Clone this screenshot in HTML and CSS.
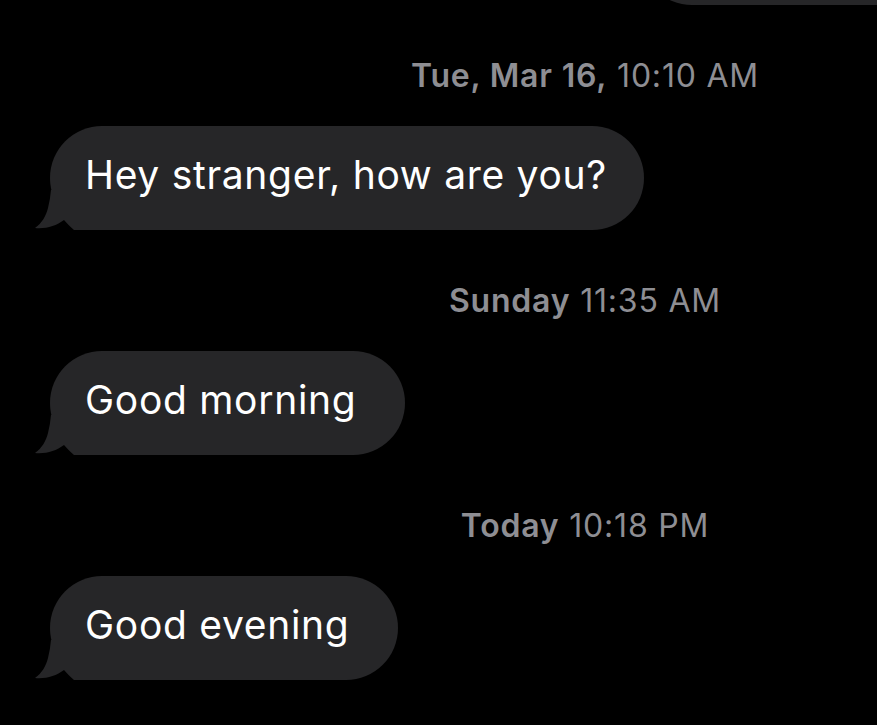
FILE: index.html
```html
<!DOCTYPE html>
<html>
<head>
  <meta charset="utf-8">
  <meta name="viewport" content="width=device-width, initial-scale=1">
  <title>Messages</title>
  <link rel="stylesheet" href="styles.css">
</head>
<body>
  <div class="thread">

    <!-- tail end of the previous message, scrolled mostly out of view -->
    <div class="bubble bubble-prev"></div>

    <div class="group">
      <p class="stamp"><b>Tue, Mar 16,</b> 10:10 AM</p>
      <div class="row">
        <div class="bubble bubble-long">
          Hey stranger, how are you?
          <svg class="tail" viewBox="0 0 70 40" width="70" height="40"><path d="M17 0 L70 0 L70 40 L40 40 C36 37 33 33 30 30 C22 36 12 39 1 38 C8 33 12 26 14 18 C15.5 12 16.5 6 17 0 Z"/></svg>
        </div>
      </div>
    </div>

    <div class="group">
      <p class="stamp"><b>Sunday</b> 11:35 AM</p>
      <div class="row">
        <div class="bubble">
          Good morning
          <svg class="tail" viewBox="0 0 70 40" width="70" height="40"><path d="M17 0 L70 0 L70 40 L40 40 C36 37 33 33 30 30 C22 36 12 39 1 38 C8 33 12 26 14 18 C15.5 12 16.5 6 17 0 Z"/></svg>
        </div>
      </div>
    </div>

    <div class="group">
      <p class="stamp"><b>Today</b> 10:18 PM</p>
      <div class="row">
        <div class="bubble">
          Good evening
          <svg class="tail" viewBox="0 0 70 40" width="70" height="40"><path d="M17 0 L70 0 L70 40 L40 40 C36 37 33 33 30 30 C22 36 12 39 1 38 C8 33 12 26 14 18 C15.5 12 16.5 6 17 0 Z"/></svg>
        </div>
      </div>
    </div>

  </div>
</body>
</html>
```

FILE: styles.css
```css
html, body {
  background-color: #000000;
  margin: 0;
  padding: 0;
  overflow: hidden;
}
body {
  font-family: 'Inter', 'Roboto', sans-serif;
  color: #FFFFFF;
}
.thread {
  width: 1170px;
  display: flex;
  flex-direction: column;
}
.group {
  display: flex;
  flex-direction: column;
}
.stamp {
  margin: 53px 0 0 0;
  text-align: center;
  font-size: 32px;
  line-height: 36px;
  letter-spacing: 0.8px;
  color: #8E8E93;
  font-weight: 400;
}
.stamp b {
  font-weight: 600;
}
.row {
  display: flex;
  margin-top: 32px;
  padding-left: 50px;
}
.bubble {
  position: relative;
  background-color: #262628;
  border-radius: 52px;
  padding: 27px 49px 34px 35px;
  font-size: 39px;
  line-height: 43px;
  letter-spacing: 0.7px;
  white-space: nowrap;
}
.bubble-long {
  padding-right: 37px;
}
.bubble-prev {
  height: 104px;
  padding: 0;
  margin: -99px 48px 0 640px;
}
.tail {
  position: absolute;
  left: -16px;
  bottom: 0;
  fill: #262628;
  z-index: 0;
}
```
